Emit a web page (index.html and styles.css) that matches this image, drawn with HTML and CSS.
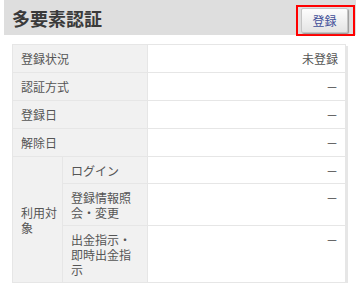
FILE: index.html
```html
<!DOCTYPE html>
<html lang="ja">

<head>
    <meta charset="UTF-8">
    <meta name="viewport" content="width=device-width, initial-scale=1.0">
    <title>多要素認証</title>
    <link rel="stylesheet" href="styles.css">
</head>

<body>
    <div class="header">
        <h1 class="title">多要素認証</h1>
        <span class="highlight">
            <button class="button">登録</button>
        </span>
    </div>

    <table class="info">
        <colgroup>
            <col class="col-a">
            <col class="col-b">
            <col>
        </colgroup>
        <tr>
            <th colspan="2">登録状況</th>
            <td>未登録</td>
        </tr>
        <tr>
            <th colspan="2">認証方式</th>
            <td><span class="dash">－</span></td>
        </tr>
        <tr>
            <th colspan="2">登録日</th>
            <td><span class="dash">－</span></td>
        </tr>
        <tr>
            <th colspan="2">解除日</th>
            <td><span class="dash">－</span></td>
        </tr>
        <tr class="sub">
            <th rowspan="3" class="group">利用対象</th>
            <th>ログイン</th>
            <td><span class="dash">－</span></td>
        </tr>
        <tr class="sub">
            <th>登録情報照会・変更</th>
            <td><span class="dash">－</span></td>
        </tr>
        <tr class="sub">
            <th>出金指示・即時出金指示</th>
            <td><span class="dash">－</span></td>
        </tr>
    </table>
</body>

</html>
```

FILE: styles.css
```css
body {
    font-family: "Noto Sans CJK JP", "Noto Sans", sans-serif;
    background: #fff;
    color: #555;
    margin: 0;
    padding: 0;
}

.header {
    display: flex;
    align-items: center;
    justify-content: space-between;
    height: 35px;
    margin: 0 4px;
    padding: 0 1px 0 8px;
    background: #dedede;
}

.title {
    margin: 0;
    font-size: 18px;
    font-weight: bold;
    color: #3a3a3a;
}

.highlight {
    display: flex;
    align-items: center;
    margin-top: 5px;
    padding: 1px 5px 1px 3px;
    border: 2px solid #f00;
}

.button {
    width: 47px;
    height: 25px;
    padding: 0;
    font-family: inherit;
    font-size: 12px;
    color: #3f4f99;
    background: linear-gradient(to bottom, #fdfdfd, #e4e4e4);
    border: 1px solid #c4c4c4;
    border-radius: 2px;
    box-shadow: 1px 1px 1px #999;
}

.info {
    margin: 9px 0 0 12px;
    width: 334px;
    table-layout: fixed;
    border-collapse: collapse;
    border: 1px solid #e2e2e2;
    box-shadow: 2px 2px 0 #e6e6e6;
    font-size: 12px;
    line-height: 15px;
}

.col-a {
    width: 50px;
}

.col-b {
    width: 85px;
}

.info th,
.info td {
    padding: 6px 7px 6px 8px;
    border: 1px solid #e6e6e6;
    vertical-align: top;
    font-weight: normal;
}

.info .sub th,
.info .sub td {
    padding-bottom: 5px;
}

.info th {
    text-align: left;
    background: #f1f1f1;
}

.info th.group {
    vertical-align: middle;
    padding-right: 4px;
}

.info td {
    text-align: right;
    background: #fff;
}

.dash {
    color: #444;
}
```
